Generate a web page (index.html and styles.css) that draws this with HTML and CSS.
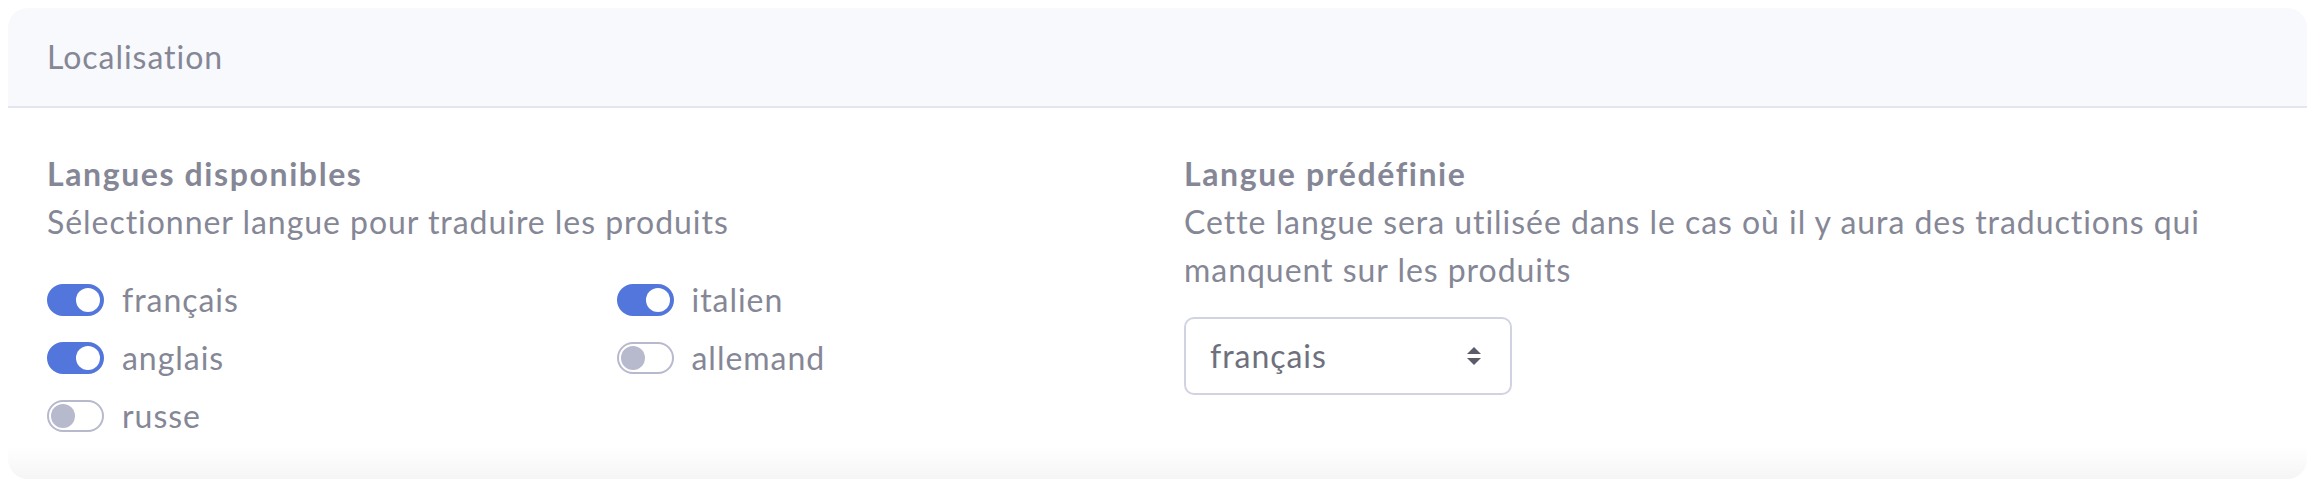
FILE: index.html
```html
<!DOCTYPE html>
<html lang="fr">
<head>
<meta charset="utf-8">
<title>Localisation</title>
<link rel="stylesheet" href="styles.css">
</head>
<body>
<section class="card">
  <header class="card-header">Localisation</header>
  <div class="card-body">
    <div class="col">
      <h3 class="field-title">Langues disponibles</h3>
      <p class="field-desc">Sélectionner langue pour traduire les produits</p>
      <div class="switch-grid">
        <label class="switch"><input type="checkbox" checked><span class="track"></span><span class="switch-label">français</span></label>
        <label class="switch"><input type="checkbox" checked><span class="track"></span><span class="switch-label">italien</span></label>
        <label class="switch"><input type="checkbox" checked><span class="track"></span><span class="switch-label">anglais</span></label>
        <label class="switch"><input type="checkbox"><span class="track"></span><span class="switch-label">allemand</span></label>
        <label class="switch"><input type="checkbox"><span class="track"></span><span class="switch-label">russe</span></label>
      </div>
    </div>
    <div class="col">
      <h3 class="field-title">Langue prédéfinie</h3>
      <p class="field-desc">Cette langue sera utilisée dans le cas où il y aura des traductions qui manquent sur les produits</p>
      <div class="select">
        <span class="select-value">français</span>
        <svg class="select-arrows" width="16" height="20" viewBox="0 0 16 20" aria-hidden="true">
          <polygon points="1,8 8,1 15,8" fill="#5a5c69"/>
          <polygon points="1,12 8,19 15,12" fill="#5a5c69"/>
        </svg>
      </div>
    </div>
  </div>
</section>
</body>
</html>
```
FILE: styles.css
```css
html, body {
  background: #ffffff;
}
body {
  margin: 8px;
  font-family: "Lato", "Noto Sans", sans-serif;
  font-size: 32px;
  line-height: 48px;
  letter-spacing: 0.03em;
  color: #858796;
}
.card {
  border-radius: 20px;
  overflow: hidden;
  background: #ffffff;
}
.card-header {
  background: #f8f9fc;
  border-bottom: 2px solid #e3e6f0;
  padding: 25px 40px 25px 39px;
}
.card-body {
  display: grid;
  grid-template-columns: 1fr 1fr;
  column-gap: 54px;
  padding: 42px 40px 39px 39px;
  background: linear-gradient(to bottom, #ffffff calc(100% - 32px), #f5f5f6 100%);
}
.field-title {
  margin: 0;
  font-size: 32px;
  font-weight: 700;
  line-height: 48px;
  letter-spacing: 0.05em;
}
.field-desc {
  margin: 0;
}
.switch-grid {
  margin-top: 30px;
  display: grid;
  grid-template-columns: 1fr 1fr;
  column-gap: 56px;
  row-gap: 10px;
}
.switch {
  display: flex;
  align-items: center;
  height: 48px;
  cursor: pointer;
}
.switch input {
  display: none;
}
.track {
  box-sizing: border-box;
  width: 57px;
  height: 32px;
  border: 2px solid #b7b9cc;
  border-radius: 16px;
  background: #ffffff;
  display: flex;
  align-items: center;
  padding: 0 2px;
  margin-right: 18px;
  flex: none;
}
.track::after {
  content: "";
  width: 24px;
  height: 24px;
  border-radius: 50%;
  background: #b7b9cc;
}
.switch input:checked + .track {
  background: #5376dc;
  border-color: #5376dc;
  justify-content: flex-end;
}
.switch input:checked + .track::after {
  background: #ffffff;
}
.select {
  box-sizing: border-box;
  margin-top: 23px;
  width: 328px;
  height: 78px;
  border: 2px solid #d1d3e2;
  border-radius: 10px;
  padding: 0 28px 0 24px;
  display: flex;
  align-items: center;
  justify-content: space-between;
  color: #6e707e;
}
```
